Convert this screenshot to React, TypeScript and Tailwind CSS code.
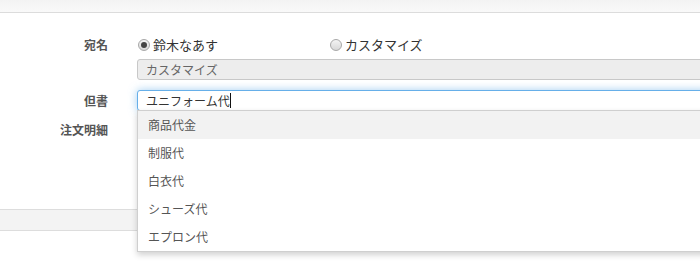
import React from 'react';

const font = { fontFamily: '"Noto Sans CJK JP", "Noto Sans", sans-serif' };

function Radio({ checked = false, label }: { checked?: boolean; label: string }) {
  return (
    <label className="flex items-center gap-[3px] text-[13px] text-[#333]">
      <span className="w-[12px] h-[12px] rounded-full border border-[#a8a8a8] bg-gradient-to-b from-[#f4f4f4] to-[#d8d8d8] flex items-center justify-center">
        {checked && <span className="w-[6px] h-[6px] rounded-full bg-[#444]" />}
      </span>
      <span>{label}</span>
    </label>
  );
}

const suggestions = ['商品代金', '制服代', '白衣代', 'シューズ代', 'エプロン代'];

export default function App() {
  return (
    <div className="w-[700px] h-[267px] overflow-hidden bg-white relative" style={font}>
      {/* top bar */}
      <div className="h-[13px] bg-gradient-to-b from-[#f3f3f3] to-[#f9f9f9] border-b border-[#dcdcdc]" />

      <div className="pt-[22px]">
        {/* 宛名 */}
        <div className="flex">
          <div className="w-[108px] shrink-0 h-[20px] flex items-center justify-end text-[12px] font-bold text-[#555]">宛名</div>
          <div className="ml-[29px] shrink-0 flex flex-col">
            <div className="h-[20px] flex items-center pl-[1px]">
              <div className="w-[192px]">
                <Radio checked label="鈴木なあす" />
              </div>
              <Radio label="カスタマイズ" />
            </div>
            <div className="mt-[4px] w-[620px] h-[21px] rounded-[3px] border border-[#c8c8c8] bg-[#ededed] flex items-center pl-[8px] text-[12px] text-[#666]">
              カスタマイズ
            </div>
          </div>
        </div>

        {/* 但書 */}
        <div className="flex mt-[10px] relative z-10">
          <div className="w-[108px] shrink-0 h-[21px] flex items-center justify-end text-[12px] font-bold text-[#555]">但書</div>
          <div className="ml-[29px] shrink-0 relative">
            <div className="w-[620px] h-[21px] rounded-[3px] border border-[#66afe9] shadow-[0_0_8px_rgba(102,175,233,0.6)] bg-white flex items-center pl-[8px] text-[12px] text-[#333]">
              <span>ユニフォーム代</span>
              <span className="w-px h-[15px] bg-[#111]" />
            </div>
            <div className="absolute left-0 top-[20px] w-[620px] bg-white border border-[#cfcfcf] shadow-[0_3px_6px_rgba(0,0,0,0.18)]">
              {suggestions.map((s, i) => (
                <div
                  key={s}
                  className={`h-[28px] flex items-center pl-[10px] text-[12px] text-[#555] ${i === 0 ? 'bg-[#f2f2f2]' : 'bg-white'}`}
                >
                  {s}
                </div>
              ))}
            </div>
          </div>
        </div>

        {/* 注文明細 */}
        <div className="flex mt-[9px]">
          <div className="w-[108px] shrink-0 h-[20px] flex items-center justify-end text-[12px] font-bold text-[#555]">注文明細</div>
        </div>

        {/* footer band */}
        <div className="mt-[69px] h-[22px] bg-[#f3f3f3] border-y border-[#dddddd]" />
      </div>
    </div>
  );
}
